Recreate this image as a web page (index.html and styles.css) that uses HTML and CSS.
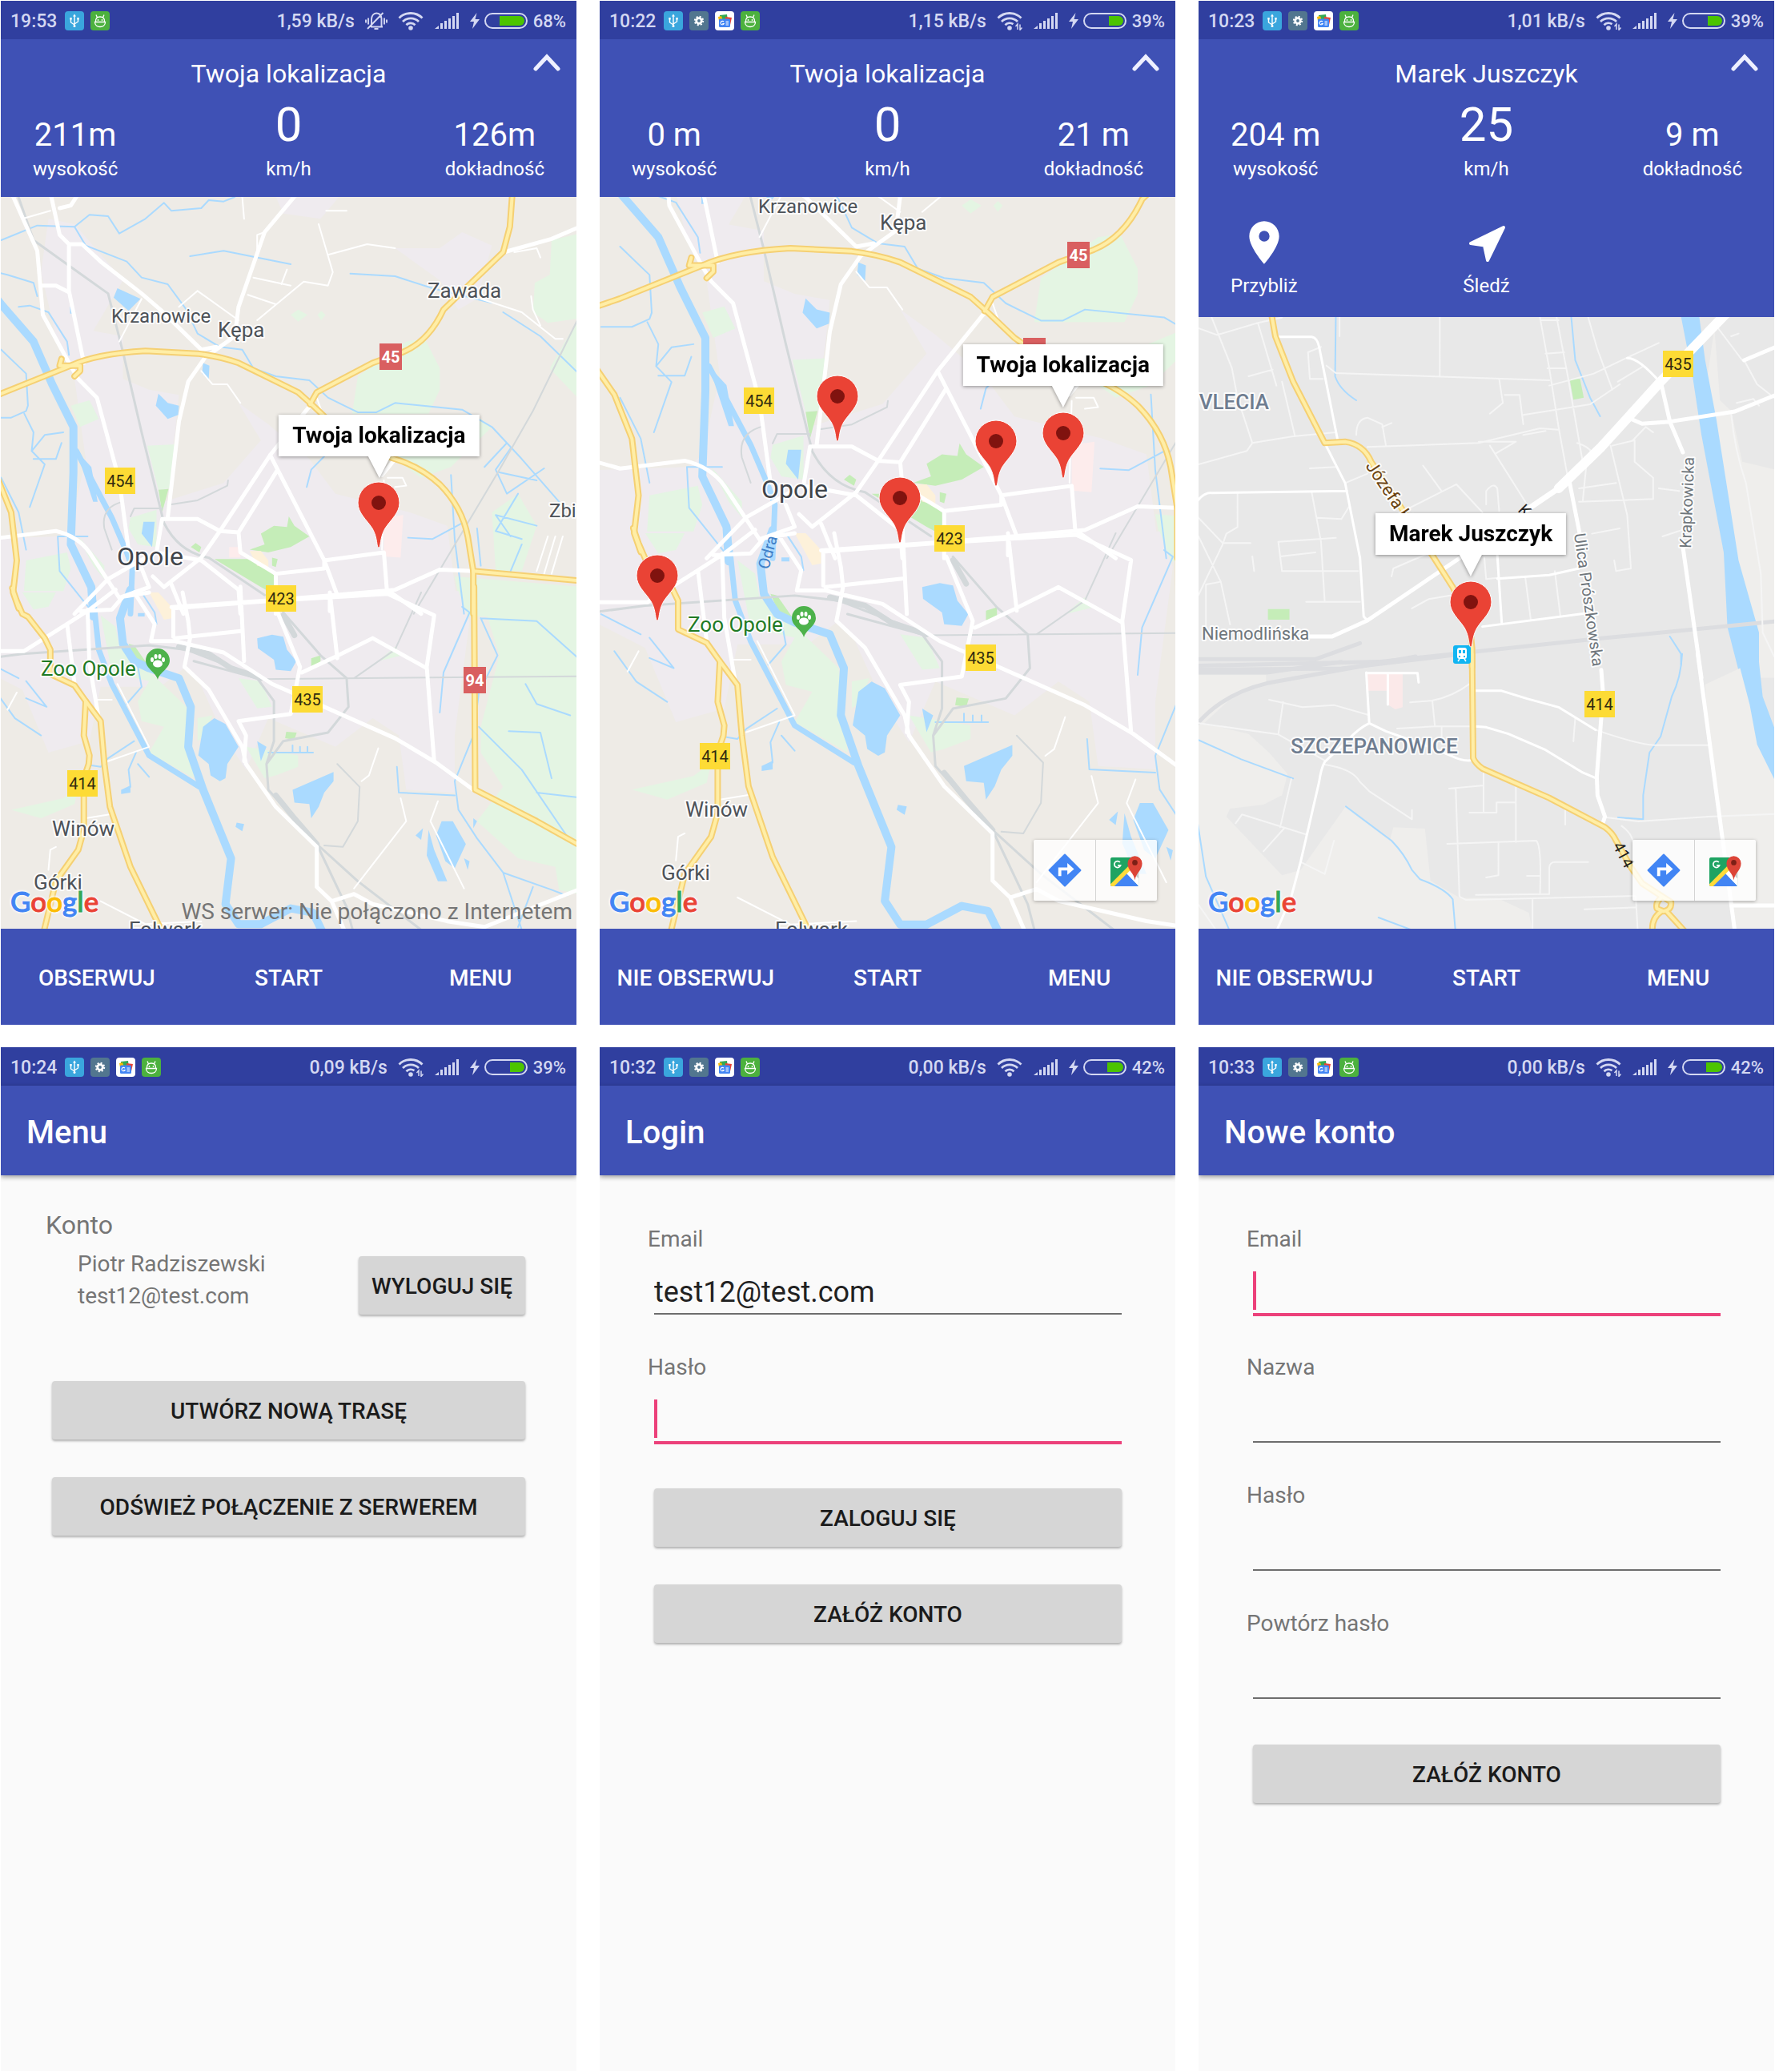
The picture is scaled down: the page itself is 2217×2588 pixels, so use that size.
FILE: index.html
```html
<!DOCTYPE html>
<html lang="pl">
<head>
<meta charset="utf-8">
<meta name="viewport" content="width=device-width, initial-scale=1">
<title>Lokalizacja – ekrany aplikacji</title>
<link rel="stylesheet" href="styles.css">
</head>
<body>
<svg class="defs" aria-hidden="true">
  <defs>
    <symbol id="i-usb" viewBox="0 0 24 24"><rect width="24" height="24" rx="4" fill="#3aa6dd"/><path d="M12 5v14M12 17l-4.500-3V9.500M12 16l4.500-3V9.500" fill="none" stroke="#fff" stroke-width="1.400"/><path d="M12 3.500l-2 3h4zM6.300 8h2.400v2.400H6.300zM15.300 8h2.400v2.400h-2.400z" fill="#fff"/><circle cx="12" cy="18.500" r="1.500" fill="#fff"/></symbol>
    <symbol id="i-gear" viewBox="0 0 24 24"><rect width="24" height="24" rx="4" fill="#52768f"/><circle cx="12" cy="12" r="3.300" fill="none" stroke="#fff" stroke-width="2.800"/><circle cx="12" cy="12" r="5.200" fill="none" stroke="#fff" stroke-width="2" stroke-dasharray="2.040 2.040"/></symbol>
    <symbol id="i-news" viewBox="0 0 24 24"><rect width="24" height="24" rx="4" fill="#fff"/><path d="M6 5l9-1 1 8H6z" fill="#34a853"/><path d="M4 7l4-1 2 6H5z" fill="#fbbc04"/><path d="M13 7l8 1-2 9-6-1z" fill="#ea4335"/><rect x="5" y="9.500" width="14" height="10.500" rx="1.500" fill="#4285f4"/><path d="M11 13.300a2.200 2.200 0 1 0 .2 2.200H9.300M13.500 13h3.500M13.500 15h3.500M13.500 17h3.500" stroke="#fff" stroke-width="1.100" fill="none"/></symbol>
    <symbol id="i-bot" viewBox="0 0 24 24"><rect width="24" height="24" rx="4" fill="#4cb13e"/><path d="M5.500 13.500h13c0 4-3 6-6.500 6s-6.500-2-6.500-6zM6.500 13c-.5-4 2-6 5.500-6s6 2 5.500 6M8.500 8L7 4.500M15.500 8L17 4.500" fill="none" stroke="#fff" stroke-width="1.300"/><circle cx="9.500" cy="11" r=".9" fill="#fff"/><circle cx="14.500" cy="11" r=".9" fill="#fff"/></symbol>
    <symbol id="i-mute" viewBox="0 0 28 24"><path d="M7 19.500h15M8 19v-9c0-4 2.500-7.500 6-7.500s6 2.500 6.500 6.500v10M11.500 22h5M4 8.500v8M1 10.500v4M24 8.500v8M27 10.500v4M22.500 2L3 22" fill="none" stroke="#d4d8f2" stroke-width="1.900"/></symbol>
    <symbol id="i-wifi" viewBox="0 0 32 24"><g fill="none" stroke="#d4d8f2" stroke-width="2.800"><path d="M1.500 8.500C9.500.5 22.500.5 30.500 8.500M6 13c5.500-5.500 14.500-5.500 20 0M10.500 17.200c3-3 8-3 11 0"/></g><circle cx="16" cy="21" r="2.800" fill="#d4d8f2"/></symbol>
    <symbol id="i-wifi-io" viewBox="0 0 32 24"><g fill="none" stroke="#d4d8f2" stroke-width="2.800"><path d="M1.500 8.500C9.500.5 22.500.5 30.500 8.500M6 13c5.500-5.500 14.500-5.500 20 0M10.500 17.200c2.800-2.800 7-3 10-1"/></g><circle cx="16" cy="21" r="2.800" fill="#d4d8f2"/><path d="M26 23v-7l-2.500 3M29 16.500v7l2.500-3" fill="none" stroke="#d4d8f2" stroke-width="1.500"/></symbol>
    <symbol id="i-signal" viewBox="0 0 30 20"><path d="M0 20l5-4V20zM7 20v-7h3v7zM12 20V10h3v10zM17 20V7h3v13zM22 20V4h3v16zM27 20V0h3v20z" fill="#d4d8f2"/></symbol>
    <symbol id="i-bolt" viewBox="0 0 12 20"><path d="M8.500 0L0 11h5l-2 9 9-12H6.500z" fill="#d4d8f2"/></symbol>
    <symbol id="i-up" viewBox="0 0 34 22"><path d="M3 19L17 4l14 15" fill="none" stroke="#eef0ff" stroke-width="5" stroke-linecap="round"/></symbol>
    <symbol id="i-place" viewBox="0 0 24 24"><path d="M12 2C8.130 2 5 5.130 5 9c0 5.250 7 13 7 13s7-7.750 7-13c0-3.870-3.130-7-7-7zm0 9.500a2.500 2.500 0 0 1 0-5 2.500 2.500 0 0 1 0 5z" fill="#fff"/></symbol>
    <symbol id="i-follow" viewBox="0 0 64 64"><path d="M53 13L12 33l17 2.500L33 54z" fill="#fff" stroke="#fff" stroke-width="4" stroke-linejoin="round"/></symbol>
    <symbol id="i-directions" viewBox="0 0 40 40"><path d="M20 1.500L38.500 20 20 38.500 1.500 20z" fill="#4285f4" stroke="#4285f4" stroke-width="2" stroke-linejoin="round"/><path d="M14 27v-8.500h11" fill="none" stroke="#fff" stroke-width="3.600"/><path d="M23 11.500l8 7-8 7z" fill="#fff"/></symbol>
    <symbol id="i-maps" viewBox="0 0 44 44"><clipPath id="maps-clip"><rect x="1" y="5" width="37" height="38" rx="3"/></clipPath><g clip-path="url(#maps-clip)"><path d="M1 5h37v38H1z" fill="#1ea362"/><path d="M38 5v38L19 24z" fill="#c9cbce"/><path d="M19 24l19 19V33L24 19z" fill="#fff"/><path d="M1 43l19-19 18 19z" fill="#4285f4"/><path d="M-2 43L30 11l4 4L3 46z" fill="#fddb3a"/></g><path d="M13.500 11.500a4.200 4.200 0 1 0 .8 4H10.500" fill="none" stroke="#fff" stroke-width="1.800"/><path d="M33 35c-.8-9-9.500-13-9.500-22a9.500 9.500 0 0 1 19 0c0 9-8.700 13-9.500 22z" fill="#dc4437"/><circle cx="33" cy="12" r="3.500" fill="#7c1f16"/></symbol>

    <!-- map markers: origin is the tip -->
    <g id="marker"><path d="M0 0C-3 0-1-12-8-24-15-35-26-43-26-56A26 26 0 0 1 26-56C26-43 15-35 8-24 1-12 3 0 0 0z" fill="#ea4335" stroke="#fff" stroke-width="1"/><circle cy="-56" r="9" fill="#80130f"/></g>
    <g id="zoo"><path d="M0 0C-2-9-15-14-15-24a15 15 0 0 1 30 0C15-14 2-9 0 0z" fill="#4db24b"/><g fill="#fff"><ellipse cy="-20" rx="6" ry="4.500"/><ellipse cx="-7" cy="-25" rx="2" ry="3"/><ellipse cx="-2.500" cy="-29" rx="2" ry="3"/><ellipse cx="2.500" cy="-29" rx="2" ry="3"/><ellipse cx="7" cy="-25" rx="2" ry="3"/></g></g>

    <!-- trunk roads of the Opole map, stroked twice -->
    <g id="opole-trunk">
      <g transform="translate(-1 -6) scale(.4655 .3333)">
        <path d="M-60 785L3 755 190 650Q260 605 390 595L530 605Q590 615 640 640L800 750 840 800 900 880 980 960 1060 1000Q1130 1030 1180 1095 1240 1180 1255 1290L1270 1420V1580"/>
        <path d="M1375 0L1368 130 1350 225 1190 440Q1150 560 1080 600L1000 640 850 750 832 795"/>
        <path d="M1270 1420L1570 1458"/>
        <path d="M-60 960L-10 1060 30 1200 45 1380 35 1500 50 1560"/>
        <path d="M165 625L160 650 190 650M190 650L215 650 215 670 200 690"/>
      </g>
      <g transform="translate(-1 494) scale(.4655 .3571)">
        <path d="M33-15L45 30 60 75 75 85 120 160 135 200V285L200 325 230 380 225 500 240 570 238 600 225 650V830L210 900 150 1010 115 1200"/>
        <path d="M230 380L270 450 280 600 295 750 350 960 440 1200"/>
        <path d="M1272-20L1275 690 1440 800 1570 895"/>
      </g>
    </g>

    <g id="opole">
      <rect x="-40" y="-10" width="780" height="940" fill="#eeebe6"/>
      <g transform="translate(-1 -6) scale(.4655 .3333)">
        <g class="m-city">
          <path d="M130 100L200 120 330 330 250 520 330 540V700L400 740 480 760 470 900 440 1160 600 1090 700 930 640 790 720 870 830 1000 900 1130 1100 1200 1200 1250 1230 1580H-60V1300L160 1290 190 1250 230 1000 200 700 150 540 110 300z"/>
          <path d="M740 18H910L860 100 760 80z"/><path d="M1060 210L1180 210 1240 150 1320 200 1280 400 1230 440 1180 330z"/>
        </g>
        <g class="m-green">
          <path d="M1480 180L1570 150V470L1470 490 1430 450 1435 340 1475 310zM1570 430V800L1475 660zM960 690L1090 560 1140 550 1180 660V740L1150 830H945zM1050 990L1290 850 1320 880 1210 1030 1130 1070zM1390 1130L1440 1250 1400 1420H1330L1320 1200zM1220 1440L1570 1480V1590H1240zM395 950L470 945 455 1110 425 1115zM350 1220L420 1190 420 1330 370 1320 345 1260zM190 800L240 780 265 850 215 880zM70 1380L180 1350 190 1410 150 1580H60z"/>
          <path d="M780 460L800 440 825 460 800 485zM852 460L862 445 873 460 862 480zM210 1290L280 1400 280 1450 250 1400z"/>
        </g>
        <path class="m-park" d="M425 1115L452 1112 435 1200zM575 1375L680 1375 740 1440V1510L700 1480zM700 1280L735 1250 770 1255 775 1215 790 1250 830 1290 780 1330 720 1350 670 1340 710 1320zM512 1330L525 1315 540 1330 535 1350zM730 1370L745 1375 740 1405 730 1400z"/>
        <path fill="#fdecec" d="M1030 1220L1082 1210 1075 1370 1030 1365zM615 1330H645V1370H615z"/>
        <path fill="#fdf1da" d="M670 1345L700 1345 720 1380 720 1410 690 1400zM400 1510L420 1510 440 1560H400z"/>
      </g>
      <g transform="translate(-1 494) scale(.4655 .3571)">
        <path class="m-city" d="M-60-5H1230L1260 100 1220 500 1220 700 1090 690 1070 500 1000 440 900 540 720 440 660 620 600 500 530 300 500 260 430 330 270 330 240 520 130 560 60 340-60 260z"/>
        <g class="m-green"><path d="M1285-10H1570V1060L1500 1040 1490 960 1390 930 1280 800 1350 680 1290 560V470L1340 220zM270 80L310 120 320 190 420 300 500 400 520 650 400 560 440 470 380 450 370 380 400 310 300 280zM30 760L170 720 210 680 200 740 110 790zM640 300L700 310 730 400 690 405zM660 540L800 570V610L740 640 710 650zM530 440L570 430 550 500 530 520zM60 0H150L130 50 90 60zM1015 240L1060 190 1080 220z"/></g>
        <path class="m-park" d="M345 180L360 185 395 250 365 240zM835 230L860 220V250L835 258zM768 487L796 490 790 515 765 510z"/>
        <path fill="#fdf1da" d="M400 0H425L460 50 460 90 440 95z"/>
      </g>
      <g class="m-lake">
        <path transform="translate(-1 -6) scale(.4655 .3333)" d="M315 360L377 400 345 445 305 395zM425 755L450 790 480 800 478 835 450 850 418 800zM545 640L562 650 560 700 542 680zM385 1235L415 1235 408 1330 380 1280zM205 970L245 1030 262 1160 250 1160zM188 430H194V455H188z"/>
        <path transform="translate(-1 494) scale(.4655 .3571)" d="M690 160L730 148 760 155 770 200 795 240 780 275 740 270 735 235 692 195zM575 440L605 460 640 540 610 600 605 650 590 660 565 640 560 600 532 570 545 470zM785 690L895 628 895 660 870 700 855 750 835 790 830 740 790 735zM1185 800L1215 800 1250 880 1220 965 1195 940 1170 850zM1150 830L1165 900 1200 1010 1175 1010 1145 920zM690 520L715 540 700 590zM1270 790L1280 800 1270 825zM1115 850L1135 825 1130 865zM635 805L655 810 650 835 632 820zM325 690L350 675 350 700 325 705zM1245 930L1260 940 1255 970zM370 72H388V84H370z"/>
      </g>
      <g class="m-water">
        <g transform="translate(-1 -6) scale(.4655 .3333)">
          <path class="w9" d="M-60 310L3 420 90 560 140 720 197 880V1050L190 1320 245 1480 250 1590"/>
          <path class="w7" d="M205 970L300 1220 340 1350 355 1410 350 1580"/>
          <path class="w2" d="M3 180L100 125 200 130 240 85 290 90 320 155 390 100 440 40 460 70 540 60 560 30 600 35 630 18M200 130L230 200 340 260 380 320 450 345 500 440 530 530 590 580 650 590 680 660 740 690 830 705 880 770 960 825M960 825H1010L1060 790 1240 815 1320 880 1400 1000 1500 1160M-40 290L20 310 90 340 100 390M50 430L80 425 130 450 180 560 185 610M3 590L70 680 75 800 70 820 30 845H-40M65 830L90 900 85 970 120 1020 80 1180M85 970L120 910 170 900M90 1000L150 1000 165 940M3 1070L50 1200 70 1340M155 1290L160 1420 240 1560M235 1290H155M940 305L1060 315 1160 360 1320 415M1350 450L1450 540 1560 690M870 990L835 1040 823 1105M510 240L600 220 780 270M1210 1060L1220 1300 1245 1580M1095 1295L1160 1300 1240 1240M1360 940L1300 1030M1370 960L1330 1040 1360 1130 1460 1035M1340 1050L1440 1080M1390 1130L1330 1270 1400 1300M1370 1290L1330 1210 1440 1250M1400 1320L1370 1420M1280 1260L1290 1400"/>
        </g>
        <g transform="translate(-1 494) scale(.4655 .3571)">
          <path class="w7" d="M247-20L265 200 300 320 400 570 535 680"/>
          <path class="w9" d="M350-10L322 90 330 180 360 240 400 265 480 300 512 400 505 540 545 690 620 930 605 1090 640 1160 700 1160 780 1105 840 1120 870 1200"/>
          <path class="w2" d="M1290 90L1440 100 1560 240M1285 470L1400 620 1520 850M1365 485L1450 490 1480 650M1410 320L1440 390 1530 430M1440 700L1570 720M1240 50L1260 70 1190 280 1180 420M1290 90L1335 220 1285 350 1270 500 1220 660 1230 760 1280 860 1350 980 1480 1040 1520 1060M1350 980L1400 1180M1430 1030L1390 1170M1065 610L1070 700 1220 710M-40 240L50 300M70 310L125 400 70 370M-10 350L40 440 110 500M380 0L415 70 420 110M370 260L380 330 340 390M360 520L290 580 270 610 245 605M365 560L345 620 350 680M370 600L400 645M720 560H840M785 535V560M805 540V560M825 540V560"/>
        </g>
      </g>
      <g class="m-rail">
        <g transform="translate(-1 -6) scale(.4655 .3333)">
          <path class="w3" d="M45 0L90 180 200 290 290 380 330 600 380 900 440 1240Q480 1350 560 1370L710 1510"/>
          <path class="w2" d="M1570 420L1430 820 1340 1040 1110 1580M460 1170L530 1155 610 1100 612 1080M435 1185H360L350 1215M330 1160Q270 1180 280 1260L300 1340"/>
        </g>
        <g transform="translate(-1 494) scale(.4655 .3571)">
          <path class="w7" d="M480 190L560 215 620 265 700 300"/><path class="w7" d="M760 80L790 150M740 710L790 790 850 880"/>
          <path class="w3" d="M-60 235L60 215 400 185 500 200 700 300M760 70L860 220 930 300 935 400 880 490 760 520 715 600 720 690 850 880 930 1100 950 1200M520 240L690 300 735 380V520L715 600M850 880L960 1010 1130 1180"/>
          <path class="w2" d="M700 303L1570 293M1130 0L1060 200 950 300M905 600L965 680 960 800 920 890 870 885"/>
        </g>
      </g>
      <g class="m-road">
        <g transform="translate(-1 -6) scale(.4655 .3333)">
          <path class="w5" d="M30 0L100 220 115 460 185 640 210 700 260 770 320 1080 345 1340M135 0L160 160 185 195V370L225 640M110 350H150L185 375M185 195H220L270 260 380 380 430 440 540 590 580 580M160 60L190 50 205 18M800 0L710 150 640 430 630 540 550 620 505 710 480 860 450 1220"/>
          <path class="w5" d="M835 795L725 985 590 1270 540 1370 440 1480M725 985L745 1040 640 1275 590 1270 530 1225 435 1225 420 1350 540 1380 640 1490 645 1580M745 1040L870 1380 905 1510M640 1275L645 1350 740 1430 870 1410V1380L1030 1350 1038 1490M460 1555L720 1530 900 1510 1060 1490 1180 1415 1270 1420M-60 1270L3 1295 150 1270Q210 1290 240 1350L320 1520 400 1480 380 1410M200 1580L290 1450 390 1370M740 1430V1580M1060 1000L1025 1060M1038 1490L1130 1580M440 1480L410 1440M460 1470L492 1580M885 1510V1570M1352 225L1480 175 1547 135"/>
          <path class="w2" d="M710 150L690 160V220M680 320L780 350M770 290L755 345M665 385L740 420M530 370L640 480M530 370L480 430M690 480L815 335 880 350 893 300 855 120M880 235L985 195 1060 210M650 18L655 100M875 70H930M540 670L570 720H610L645 790M850 770L865 830M1040 1070L1080 1070 1090 1100 1060 1105M1030 1080L1025 1340M1290 400L1400 450 1490 550H1510M1425 390L1430 440 1450 500M60 100L135 70M320 560L380 400M1380 225L1440 210 1450 245M1470 1290L1440 1420M1490 1290L1460 1430M1510 1290L1480 1430"/>
        </g>
        <g transform="translate(-1 494) scale(.4655 .3571)">
          <path class="w5" d="M-60 205H65L180 110 240 60 310-10M180 110L200 320M235 60L240 250 265 440M645-20L655 240M490 0L505 100 510 160 495 260 560 340 650 540 660 600 740 750 850 890V1030L890 1080 930 1200M465 155L465 55 720 30 1040 5 1165 80 1145 260 1165 590M470 160L645 135M215 65L300 60 330 15 400 0M405 170H470L600 210 730 320 870 400 1060 510 1170 595 1270 690M745 70L805 260 780 425 640 450 660 500 655 590M885 0L905 230M810 280L900 225 1000 160 1145 265M360 0L415 110 405 170M850 1030L890 1080 950 1055 1000 1090 1200 1150 1300 1170 1570 1030"/>
          <path class="w2" d="M315 320L400 540 290 590M1015 545L990 640 970 660M1075 720L1090 800 950 1035M1175 730L1155 800 1245 1035M45 350L20 410M130 970L135 900 150 890M270 1080L390 1160 540 1150M260 375H300M230 790L300 775"/>
        </g>
      </g>
      <use href="#opole-trunk" class="m-case"/>
      <use href="#opole-trunk" class="m-trunk"/>
    </g>

    <g id="suburb-trunk">
      <path transform="translate(-7 -6) scale(.4636 .3333)" d="M208-20L222 90 270 260 355 490 410 485Q460 495 480 560L640 900 700 1030 745 1160 752 1260V1330"/>
      <path transform="translate(-7 424) scale(.4636 .3333)" d="M752-10L755 380Q760 400 780 420L960 530 1110 640Q1130 660 1140 690L1180 790 1210 850 1265 900Q1245 920 1250 945L1268 955Q1290 950 1288 920L1265 900M1262 955Q1235 980 1238 1030M1276 955L1325 1030"/>
    </g>
  </defs>
</svg>

<main class="board">
  <!-- own location, no connection -->
  <section class="phone">
    <div class="status">
      <span class="clock">19:53</span>
      <svg class="app"><use href="#i-usb"/></svg><svg class="app"><use href="#i-bot"/></svg>
      <span class="speed">1,59 kB/s</span>
      <svg class="mute"><use href="#i-mute"/></svg><svg class="wifi"><use href="#i-wifi"/></svg><svg class="signal"><use href="#i-signal"/></svg><svg class="bolt"><use href="#i-bolt"/></svg>
      <span class="battery"><i style="width:68%"></i></span><span class="percent">68%</span>
    </div>
    <header class="panel">
      <h1>Twoja lokalizacja</h1>
      <button class="collapse" aria-label="Zwiń"><svg><use href="#i-up"/></svg></button>
      <div class="stats">
        <div><b>211m</b><span>wysokość</span></div>
        <div class="main"><b>0</b><span>km/h</span></div>
        <div><b>126m</b><span>dokładność</span></div>
      </div>
    </header>
    <div class="map">
      <svg class="canvas" viewBox="0 0 719 914" preserveAspectRatio="xMidYMid slice">
        <use href="#opole"/>
        <g class="sign"><rect class="red" x="473" y="183" width="28" height="33"/><text class="on-red" x="487" y="207">45</text>
        <rect x="130" y="338" width="38" height="33"/><text x="149" y="362">454</text>
        <rect x="331" y="485" width="38" height="33"/><text x="350" y="509">423</text>
        <rect x="364" y="611" width="38" height="33"/><text x="383" y="635">435</text>
        <rect x="83" y="716" width="38" height="33"/><text x="102" y="740">414</text>
        <rect class="red" x="578" y="587" width="28" height="33"/><text class="on-red" x="592" y="611">94</text></g>
        <g class="place"><text class="small" x="138" y="157">Krzanowice</text><text x="271" y="175">Kępa</text><text x="533" y="126">Zawada</text><text class="city" x="145" y="460">Opole</text><text class="small" x="685" y="400">Zbi</text><text x="64" y="798">Winów</text><text x="41" y="865">Górki</text><text x="160" y="924">Folwark</text><text class="poi" x="50" y="598">Zoo Opole</text></g>
        <use href="#zoo" x="196" y="603"/>
        <use href="#marker" x="472" y="438"/>
      </svg>
      <div class="tip tip-own">Twoja lokalizacja</div>
      <div class="google" aria-label="Google"><span class="b">G</span><span class="r">o</span><span class="y">o</span><span class="b">g</span><span class="g">l</span><span class="r">e</span></div>
      <p class="message">WS serwer: Nie połączono z Internetem</p>
    </div>
    <nav class="actions"><button>OBSERWUJ</button><button>START</button><button>MENU</button></nav>
  </section>

  <!-- observed users -->
  <section class="phone">
    <div class="status">
      <span class="clock">10:22</span>
      <svg class="app"><use href="#i-usb"/></svg><svg class="app"><use href="#i-gear"/></svg><svg class="app"><use href="#i-news"/></svg><svg class="app"><use href="#i-bot"/></svg>
      <span class="speed">1,15 kB/s</span>
      <svg class="wifi"><use href="#i-wifi-io"/></svg><svg class="signal"><use href="#i-signal"/></svg><svg class="bolt"><use href="#i-bolt"/></svg>
      <span class="battery"><i style="width:39%"></i></span><span class="percent">39%</span>
    </div>
    <header class="panel">
      <h1>Twoja lokalizacja</h1>
      <button class="collapse" aria-label="Zwiń"><svg><use href="#i-up"/></svg></button>
      <div class="stats">
        <div><b>0 m</b><span>wysokość</span></div>
        <div class="main"><b>0</b><span>km/h</span></div>
        <div><b>21 m</b><span>dokładność</span></div>
      </div>
    </header>
    <div class="map">
      <svg class="canvas" viewBox="0 0 719 914" preserveAspectRatio="xMidYMid slice">
        <g transform="translate(25 -163) scale(1.180)"><use href="#opole"/></g>
        <g class="sign"><rect class="red" x="584" y="56" width="28" height="33"/><text class="on-red" x="598" y="80">45</text>
        <rect class="red" x="529" y="176" width="28" height="33"/>
        <rect x="180" y="238" width="38" height="33"/><text x="199" y="262">454</text>
        <rect x="418" y="410" width="38" height="33"/><text x="437" y="434">423</text>
        <rect x="457" y="559" width="38" height="33"/><text x="476" y="583">435</text>
        <rect x="125" y="682" width="38" height="33"/><text x="144" y="706">414</text></g>
        <g class="place"><text class="small" x="198" y="20">Krzanowice</text><text x="350" y="41">Kępa</text><text class="city" x="202" y="376">Opole</text><text x="107" y="774">Winów</text><text x="77" y="853">Górki</text><text x="219" y="924">Folwark</text><text class="poi" x="110" y="543">Zoo Opole</text></g>
        <text class="river" transform="translate(211 466) rotate(-75)">Odra</text>
        <use href="#zoo" x="255" y="550"/>
        <use href="#marker" x="297" y="305"/><use href="#marker" x="495" y="361"/><use href="#marker" x="579" y="351"/><use href="#marker" x="375" y="432"/><use href="#marker" x="72" y="529"/>
      </svg>
      <div class="tip tip-east">Twoja lokalizacja</div>
      <div class="google" aria-label="Google"><span class="b">G</span><span class="r">o</span><span class="y">o</span><span class="b">g</span><span class="g">l</span><span class="r">e</span></div>
      <div class="tools"><button aria-label="Trasa"><svg><use href="#i-directions"/></svg></button><button aria-label="Otwórz w Mapach"><svg><use href="#i-maps"/></svg></button></div>
    </div>
    <nav class="actions"><button>NIE OBSERWUJ</button><button>START</button><button>MENU</button></nav>
  </section>

  <!-- selected user -->
  <section class="phone">
    <div class="status">
      <span class="clock">10:23</span>
      <svg class="app"><use href="#i-usb"/></svg><svg class="app"><use href="#i-gear"/></svg><svg class="app"><use href="#i-news"/></svg><svg class="app"><use href="#i-bot"/></svg>
      <span class="speed">1,01 kB/s</span>
      <svg class="wifi"><use href="#i-wifi-io"/></svg><svg class="signal"><use href="#i-signal"/></svg><svg class="bolt"><use href="#i-bolt"/></svg>
      <span class="battery"><i style="width:39%"></i></span><span class="percent">39%</span>
    </div>
    <header class="panel">
      <h1>Marek Juszczyk</h1>
      <button class="collapse" aria-label="Zwiń"><svg><use href="#i-up"/></svg></button>
      <div class="stats">
        <div><b>204 m</b><span>wysokość</span></div>
        <div class="main"><b>25</b><span>km/h</span></div>
        <div><b>9 m</b><span>dokładność</span></div>
      </div>
      <div class="user-actions">
        <button><svg><use href="#i-place"/></svg>Przybliż</button>
        <button><svg><use href="#i-follow"/></svg>Śledź</button>
      </div>
    </header>
    <div class="map">
      <svg class="canvas" viewBox="0 0 719 764" preserveAspectRatio="xMidYMid slice">
        <rect width="719" height="764" fill="#e8e8e8"/>
        <g transform="translate(-7 -6) scale(.4636 .3333)">
          <path fill="#efeeec" d="M1405 60L1420 330 1450 370 1480 560 1570 590V1370H1500L1440 900 1380 300z"/>
          <path class="m-park" d="M1015 250H1043L1053 320 1025 328zM202 1112H260V1152H202z"/>
          <path class="m-lake" d="M1312-5H1362L1380 180 1410 400 1470 930 1525 1200V1370H1475L1440 1180 1430 900 1370 460 1345 230z"/>
          <g class="m-water"><path class="w2" d="M385 0L383 240Q395 290 440 330M1018 0L1030 180 1070 320 1097 390M1285 1215L1315 1280V1320"/></g>
        </g>
        <g transform="translate(-7 424) scale(.4636 .3333)">
          <path fill="#efeeec" d="M1380 105L1480 40 1570 300V1030H1460L1390 330zM0 70H197V100L100 160 30 250 150 290 205 360 255 440 240 520 190 555 100 570 90 600 240 820 290 800 410 565 530 690 540 640 625 645 640 840 720 905H820L905 960 915 1030H0z"/>
          <path fill="#fbe9e9" d="M470 65H565V190L545 198 525 180 522 128H472z"/>
          <path class="m-lake" d="M1465-5H1523L1535 150 1570 280V470L1520 330 1500 180z"/>
          <g class="m-water"><path class="w2" d="M10 310L130 385 270 457M412 562L535 690Q570 740 590 800L612 835Q680 870 700 910L707 1025M10 600L35 825 98 1025M500 978L590 1025M1318-10Q1315 80 1290 150L1260 300 1230 360 1213 520V610L1145 603"/></g>
        </g>
        <g class="m-rail m-rail-light">
          <g transform="translate(-7 -6) scale(.4636 .3333)"><path class="w5" d="M0 1300H330L450 1240M0 1325L500 1310 1100 1222 1570 1158M0 1340L400 1335 700 1285"/></g>
          <g transform="translate(-7 424) scale(.4636 .3333)"><path class="w5" d="M0 60L200 60 400 20M10 255Q80 140 200 100L600 0"/></g>
        </g>
        <g class="m-road m-lane">
          <g transform="translate(-7 -6) scale(.4636 .3333)">
            <path class="w2" d="M15 60L65 85 175 40 240 20M50 18L105 210 120 320 160 490 270 465 385 450M160 490L145 520 15 570M175 40L225 275M150 240L215 215M240 260L275 465M395 18V90M345 130L310 150 315 250H350M360 200L385 228 960 255M665 18V240M825 250L835 340 800 380M840 310H880L890 420M890 385L1070 345 1150 270M935 20L960 210 985 430 1010 620M980 20L1010 240 1050 560M1065 20L1090 140 1130 290M940 30L985 30M950 155L1000 150M955 210H1005M960 275L1080 230 1170 170 1255 115M1145 260L1210 205M470 505L770 490 935 435 985 440M440 460Q440 400 470 395L510 420 520 500M510 430L535 415M620 575L670 670M560 750L710 645 780 750M800 500L900 720M770 485H870L815 530M890 460L950 445M790 720V670Q810 635 820 660L825 745M315 585L385 580M410 640L470 605M120 675V805L90 830 80 870 15 1060M15 770L80 865H155M15 840L75 1010 35 1020V1180M230 860L340 850 385 845M230 860L240 970H445M235 915L330 900M320 675L345 860 355 1085M335 770L400 775 420 730M160 915L165 970M535 990L540 960 640 900M590 1110L635 1075 700 1060M785 920L790 1000 820 995M895 990L910 1150M975 970L990 1140M305 1085H450M75 1010L100 1170M1035 490Q1100 520 1060 570L1050 710M1125 500L1170 760 1180 960 1140 970 1135 930M1130 500L1190 480V560L1240 620V700L1040 710M1040 660L1140 640M1185 480L1220 430 1240 450M1075 830L1150 810M1255 660L1310 670M1265 840L1320 815M1485 180L1520 270 1566 320M1415 60L1480 180M1470 80L1450 90M1465 340L1510 325 1525 350M1450 380Q1460 520 1490 640L1530 980 1535 1200 1566 1290"/>
          </g>
          <g transform="translate(-7 424) scale(.4636 .3333)">
            <path class="w2" d="M205 162L295 190 380 182 475 220M243 170L230 292M15 250L230 292 355 390M550 270L650 262H755M645 165L652 262M585 172L645 165Q700 150 748 100M670 265V300M355 405Q430 420 450 470L475 505 590 610V575M265 460L235 640M115 625L132 592 305 667M245 645L190 730M290 770L355 815 380 690M690 495L783 483V430M708 495L718 900 735 912 1190 897M745 585H818V547H868M783 483V583M870 490V695M685 702L925 690Q940 710 935 890M823 697V820L790 828M900 822H935M762 893L960 890V790Q962 770 975 770H1065M1003 570V630M1030 230L1025 318M1055 947L1193 940M1193 900L1198 1020M915 910V1020M1110 602L1200 618 1390 600 1566 590M1155 635Q1180 660 1185 690M1085 275Q1200 330 1245 332H1390M15 930L60 1020"/>
          </g>
        </g>
        <g class="m-road">
          <g transform="translate(-7 -6) scale(.4636 .3333)">
            <path class="w3" d="M230 92H320Q335 95 340 130L390 480M355 490L410 640 450 920 460 1140 470 1155M10 710Q30 675 50 677L415 670M820 910L832 1165M820 998L960 985 1040 960M780 1178L1060 1128M1170 172Q1200 170 1260 265"/>
            <path class="w5" d="M1180 400L1210 418 1285 410 1460 372 1570 310M1262 270L1285 410 1320 525M1320 880L1370 1370M1015 640L1042 830M1485 180L1570 130M290 1215H375L470 1155 720 920"/>
            <path class="w7" d="M900 740L990 655"/><path class="w12" d="M1440 0L1260 260 1100 505 985 660"/>
          </g>
          <g transform="translate(-7 424) scale(.4636 .3333)">
            <path class="w3" d="M467 60L475 250M467 62H605L608 97M525 65V180M475 250Q445 270 420 310L355 395Q345 420 340 470L290 770 265 900 225 1030M475 250L520 280 640 340 700 375Q730 395 755 388M760 128H830L900 158 985 190 1085 275M760 262L790 265 850 290 950 350 1050 435 1088 457"/>
            <path class="w5" d="M1360-10L1460 1030M1100 50L1105 140 1088 450 1090 520 1110 600 1103 630M1455 933H1570"/>
          </g>
        </g>
        <use href="#suburb-trunk" class="m-case"/><use href="#suburb-trunk" class="m-trunk"/>
        <g class="sign"><rect x="580" y="42" width="38" height="33"/><text x="599" y="66">435</text><rect x="482" y="467" width="38" height="33"/><text x="501" y="491">414</text></g>
        <g class="district"><text x="88" y="115" text-anchor="end">VLECIA</text><text x="115" y="545">SZCZEPANOWICE</text></g>
        <g class="street"><text class="wide" x="4" y="403">Niemodlińska</text><text transform="translate(469 271) rotate(82)">Ulica Prószkowska</text><text transform="translate(615 289) rotate(-88)">Krapkowicka</text><text class="brown" transform="translate(208 186) rotate(56)">Józefa H</text><text class="black" transform="translate(517 660) rotate(62)">414</text><text class="black" transform="translate(398 242) rotate(45)">K</text></g>
        <g transform="translate(318 410)"><rect width="22" height="23" rx="3" fill="#12b5f2"/><rect x="5" y="3" width="12" height="14" rx="3" fill="#fff"/><path d="M7 6h3v4H7zM12 6h3v4h-3zM7 13h2v2H7zM13 13h2v2h-2z" fill="#12b5f2"/><path d="M8 17l-2 3M14 17l2 3" stroke="#fff" stroke-width="1.500"/></g>
        <use href="#marker" x="340" y="412"/>
      </svg>
      <div class="tip tip-user">Marek Juszczyk</div>
      <div class="google" aria-label="Google"><span class="b">G</span><span class="r">o</span><span class="y">o</span><span class="b">g</span><span class="g">l</span><span class="r">e</span></div>
      <div class="tools"><button aria-label="Trasa"><svg><use href="#i-directions"/></svg></button><button aria-label="Otwórz w Mapach"><svg><use href="#i-maps"/></svg></button></div>
    </div>
    <nav class="actions"><button>NIE OBSERWUJ</button><button>START</button><button>MENU</button></nav>
  </section>

  <!-- menu -->
  <section class="phone">
    <div class="status">
      <span class="clock">10:24</span>
      <svg class="app"><use href="#i-usb"/></svg><svg class="app"><use href="#i-gear"/></svg><svg class="app"><use href="#i-news"/></svg><svg class="app"><use href="#i-bot"/></svg>
      <span class="speed">0,09 kB/s</span>
      <svg class="wifi"><use href="#i-wifi-io"/></svg><svg class="signal"><use href="#i-signal"/></svg><svg class="bolt"><use href="#i-bolt"/></svg>
      <span class="battery"><i style="width:39%"></i></span><span class="percent">39%</span>
    </div>
    <header class="appbar"><h1>Menu</h1></header>
    <div class="menu">
      <h2>Konto</h2>
      <div class="account">
        <p>Piotr Radziszewski<br>test12@test.com</p>
        <button class="raised">WYLOGUJ SIĘ</button>
      </div>
      <div class="stack"><button class="raised">UTWÓRZ NOWĄ TRASĘ</button><button class="raised">ODŚWIEŻ POŁĄCZENIE Z SERWEREM</button></div>
    </div>
  </section>

  <!-- sign in -->
  <section class="phone">
    <div class="status">
      <span class="clock">10:32</span>
      <svg class="app"><use href="#i-usb"/></svg><svg class="app"><use href="#i-gear"/></svg><svg class="app"><use href="#i-news"/></svg><svg class="app"><use href="#i-bot"/></svg>
      <span class="speed">0,00 kB/s</span>
      <svg class="wifi"><use href="#i-wifi"/></svg><svg class="signal"><use href="#i-signal"/></svg><svg class="bolt"><use href="#i-bolt"/></svg>
      <span class="battery"><i style="width:42%"></i></span><span class="percent">42%</span>
    </div>
    <header class="appbar"><h1>Login</h1></header>
    <form class="form">
      <div class="field"><label for="login-email">Email</label><input id="login-email" type="text" value="test12@test.com"></div>
      <div class="field"><label for="login-pass">Hasło</label><input id="login-pass" class="active" type="password"></div>
      <div class="stack"><button type="button" class="raised">ZALOGUJ SIĘ</button><button type="button" class="raised">ZAŁÓŻ KONTO</button></div>
    </form>
  </section>

  <!-- sign up -->
  <section class="phone">
    <div class="status">
      <span class="clock">10:33</span>
      <svg class="app"><use href="#i-usb"/></svg><svg class="app"><use href="#i-gear"/></svg><svg class="app"><use href="#i-news"/></svg><svg class="app"><use href="#i-bot"/></svg>
      <span class="speed">0,00 kB/s</span>
      <svg class="wifi"><use href="#i-wifi-io"/></svg><svg class="signal"><use href="#i-signal"/></svg><svg class="bolt"><use href="#i-bolt"/></svg>
      <span class="battery"><i style="width:42%"></i></span><span class="percent">42%</span>
    </div>
    <header class="appbar"><h1>Nowe konto</h1></header>
    <form class="form">
      <div class="field"><label for="new-email">Email</label><input id="new-email" class="active" type="text"></div>
      <div class="field"><label for="new-name">Nazwa</label><input id="new-name" type="text"></div>
      <div class="field"><label for="new-pass">Hasło</label><input id="new-pass" type="password"></div>
      <div class="field"><label for="new-pass2">Powtórz hasło</label><input id="new-pass2" type="password"></div>
      <div class="stack"><button type="button" class="raised">ZAŁÓŻ KONTO</button></div>
    </form>
  </section>
</main>
</body>
</html>
```
FILE: styles.css
```css
* { box-sizing: border-box; margin: 0; padding: 0; }
body { background: #fff; font-family: Roboto, "Noto Sans", sans-serif; }
button, input { font: inherit; color: inherit; border: 0; background: none; }
button { cursor: pointer; }
svg { display: block; }
.defs { position: absolute; width: 0; height: 0; }

.board { display: grid; grid-template-columns: repeat(3, 1fr); gap: 28px 29px; padding: 1px; }
.phone { display: flex; flex-direction: column; min-width: 0; aspect-ratio: 719 / 1279; background: #fafafa; overflow: hidden; }

/* system bar */
.status { display: flex; align-items: center; height: 48px; flex: none; padding: 2px 13px 0 12px; background: #303f9f; color: #d4d8f2; font-size: 23px; font-weight: 500; white-space: nowrap; }
.clock { margin-right: 10px; }
.app { width: 24px; height: 24px; margin-right: 8px; }
.speed { margin-left: auto; }
.mute { width: 28px; height: 24px; margin-left: 13px; }
.wifi { width: 32px; height: 24px; margin-left: 13px; }
.signal { width: 30px; height: 20px; margin-left: 14px; }
.bolt { width: 12px; height: 20px; margin: 0 6px 0 14px; }
.battery { display: flex; justify-content: flex-end; width: 54px; height: 20px; padding: 2px; border: 2px solid #d4d8f2; border-radius: 10px; }
.battery i { background: #4cc400; border-radius: 0 8px 8px 0; }
.percent { margin-left: 7px; font-size: 22px; }

/* blue info panel */
.panel { position: relative; flex: none; display: flex; flex-direction: column; gap: 4px; padding: 24px 40px 21px; background: #3f51b5; color: #fff; }
.panel h1 { font-size: 32px; line-height: 38px; font-weight: 400; text-align: center; }
.collapse { position: absolute; top: 18px; right: 20px; }
.collapse svg { width: 34px; height: 22px; }
.stats { display: grid; grid-template-columns: 1fr auto 1fr; align-items: end; justify-items: start; }
.stats > div { display: grid; justify-items: center; }
.stats > div:last-child { justify-self: end; }
.stats b { font-size: 40px; line-height: 56px; font-weight: 400; }
.stats .main b { font-size: 60px; line-height: 82px; }
.stats span { font-size: 24px; line-height: 28px; }
.user-actions { display: grid; grid-template-columns: 1fr auto 1fr; justify-items: start; padding: 42px 0 4px; }
.user-actions button { display: grid; justify-items: center; gap: 8px; font-size: 24px; line-height: 28px; }
.user-actions svg { width: 64px; height: 64px; }

/* map */
.map { position: relative; flex: 1; min-height: 0; overflow: hidden; }
.canvas { width: 100%; height: 100%; }
.canvas path, #opole path, #opole-trunk path, #suburb-trunk path { vector-effect: non-scaling-stroke; }
.m-city { fill: #efebef; }
.m-green { fill: #e4f5e3; }
.m-park { fill: #c5edb8; }
.m-lake { fill: #aadaff; }
.m-water, .m-rail, .m-road, .m-case, .m-trunk { fill: none; stroke-linejoin: round; stroke-linecap: round; }
.m-water { stroke: #aadaff; }
.m-rail { stroke: #d3d8da; }
.m-rail-light { stroke: #dcdde0; }
.m-road { stroke: #fff; }
.m-lane { stroke: #f5f5f5; }
.m-case { stroke: #f5d073; stroke-width: 8px; }
.m-trunk { stroke: #ffeea6; stroke-width: 4px; }
.w2 { stroke-width: 2px; }
.w3 { stroke-width: 3px; }
.w5 { stroke-width: 5px; }
.w7 { stroke-width: 7px; }
.w9 { stroke-width: 10px; }
.w12 { stroke-width: 12px; }
.sign rect { fill: #fddb35; }
.sign .red { fill: #d95f60; }
.sign text { font-size: 20px; text-anchor: middle; fill: #2f2b10; }
.sign .on-red { fill: #fff; font-weight: 700; }
.place text, .district text, .street text { paint-order: stroke; stroke: rgba(255, 255, 255, .85); stroke-width: 4px; stroke-linejoin: round; }
.place text { font-size: 26px; fill: #4d5258; }
.place .small { font-size: 24px; }
.place .city { font-size: 32px; fill: #3f444a; }
.place .poi { fill: #1f7a24; }
.river { font-size: 20px; fill: #3f7fc8; }
.district text { font-size: 26px; font-weight: 500; fill: #6f7d90; }
.street text { font-size: 20px; fill: #6f767c; }
.street .wide { font-size: 22px; }
.street .brown { font-size: 22px; fill: #6b4412; }
.street .black { fill: #202020; stroke: none; }
.tip { position: absolute; transform: translate(-50%, -100%); padding: 10px 17px; background: #fff; color: #000; font-size: 28px; line-height: 32px; font-weight: 700; white-space: nowrap; filter: drop-shadow(0 1px 2px rgba(0, 0, 0, .4)); }
.tip::after { content: ""; position: absolute; left: 50%; top: 100%; margin-left: -14px; border: 14px solid transparent; border-top: 27px solid #fff; border-bottom: 0; }
.tip-own { left: 65.7%; top: 35.4%; }
.tip-east { left: 80.5%; top: 25.8%; }
.tip-user { left: 47.3%; top: 38.9%; }
.google { position: absolute; left: 12px; bottom: 13px; font-family: Lato, sans-serif; font-size: 35px; line-height: 44px; font-weight: 500; -webkit-text-stroke: 1px currentColor; text-shadow: 0 0 3px #fff, 0 0 3px #fff, 0 0 4px #fff, 0 0 4px #fff; }
.b { color: #4285f4; }
.r { color: #ea4335; }
.y { color: #fbbc05; }
.g { color: #34a853; }
.message { position: absolute; right: 5px; bottom: 5px; font-size: 28px; line-height: 32px; color: #757575; white-space: nowrap; }
.tools { position: absolute; right: 23px; bottom: 35px; display: flex; background: rgba(255, 255, 255, .8); border-radius: 2px; box-shadow: 0 1px 4px rgba(0, 0, 0, .3); }
.tools button { display: grid; place-items: center; width: 77px; height: 76px; }
.tools button + button { border-left: 1px solid #d4d4d4; }
.tools svg { width: 42px; height: 42px; }

/* bottom bar */
.actions { flex: none; display: grid; grid-template-columns: repeat(3, 1fr); height: 120px; padding-top: 2px; background: #3f51b5; color: #fff; font-size: 28px; font-weight: 500; }

/* form screens */
.appbar { flex: none; display: flex; align-items: center; height: 112px; padding: 4px 32px 0; background: #3f51b5; color: #fff; box-shadow: 0 2px 6px rgba(0, 0, 0, .4); }
.appbar h1 { font-size: 40px; font-weight: 500; }
.raised { height: 73px; padding: 2px 16px 0; border-radius: 4px; background: #d6d6d6; color: #1b1b1b; font-size: 28px; font-weight: 500; white-space: nowrap; box-shadow: 0 2px 3px rgba(0, 0, 0, .3); }
.stack { display: grid; gap: 47px; margin: 0 8px; }
.menu { padding: 43px 56px; color: #757575; }
.menu h2 { font-size: 32px; line-height: 38px; font-weight: 400; }
.account { display: flex; justify-content: space-between; align-items: flex-end; margin: 10px 8px 83px 40px; font-size: 28px; line-height: 40px; }
.account p { padding-bottom: 3px; }
.form { padding: 64px 60px; }
.field { display: grid; margin-bottom: 48px; }
.field label { font-size: 28px; line-height: 32px; color: #757575; }
.field input { height: 78px; margin: 0 7px 2px 8px; padding: 24px 0 0; border-bottom: 2px solid #6d6d6d; color: #212121; font-size: 36px; outline: 0; }
.field .active { height: 80px; margin-bottom: 0; border-bottom: 4px solid #ec407a; background: linear-gradient(#ec407a, #ec407a) 0 24px / 4px 48px no-repeat; }
.form .stack { padding-top: 7px; margin-right: 7px; }
```
